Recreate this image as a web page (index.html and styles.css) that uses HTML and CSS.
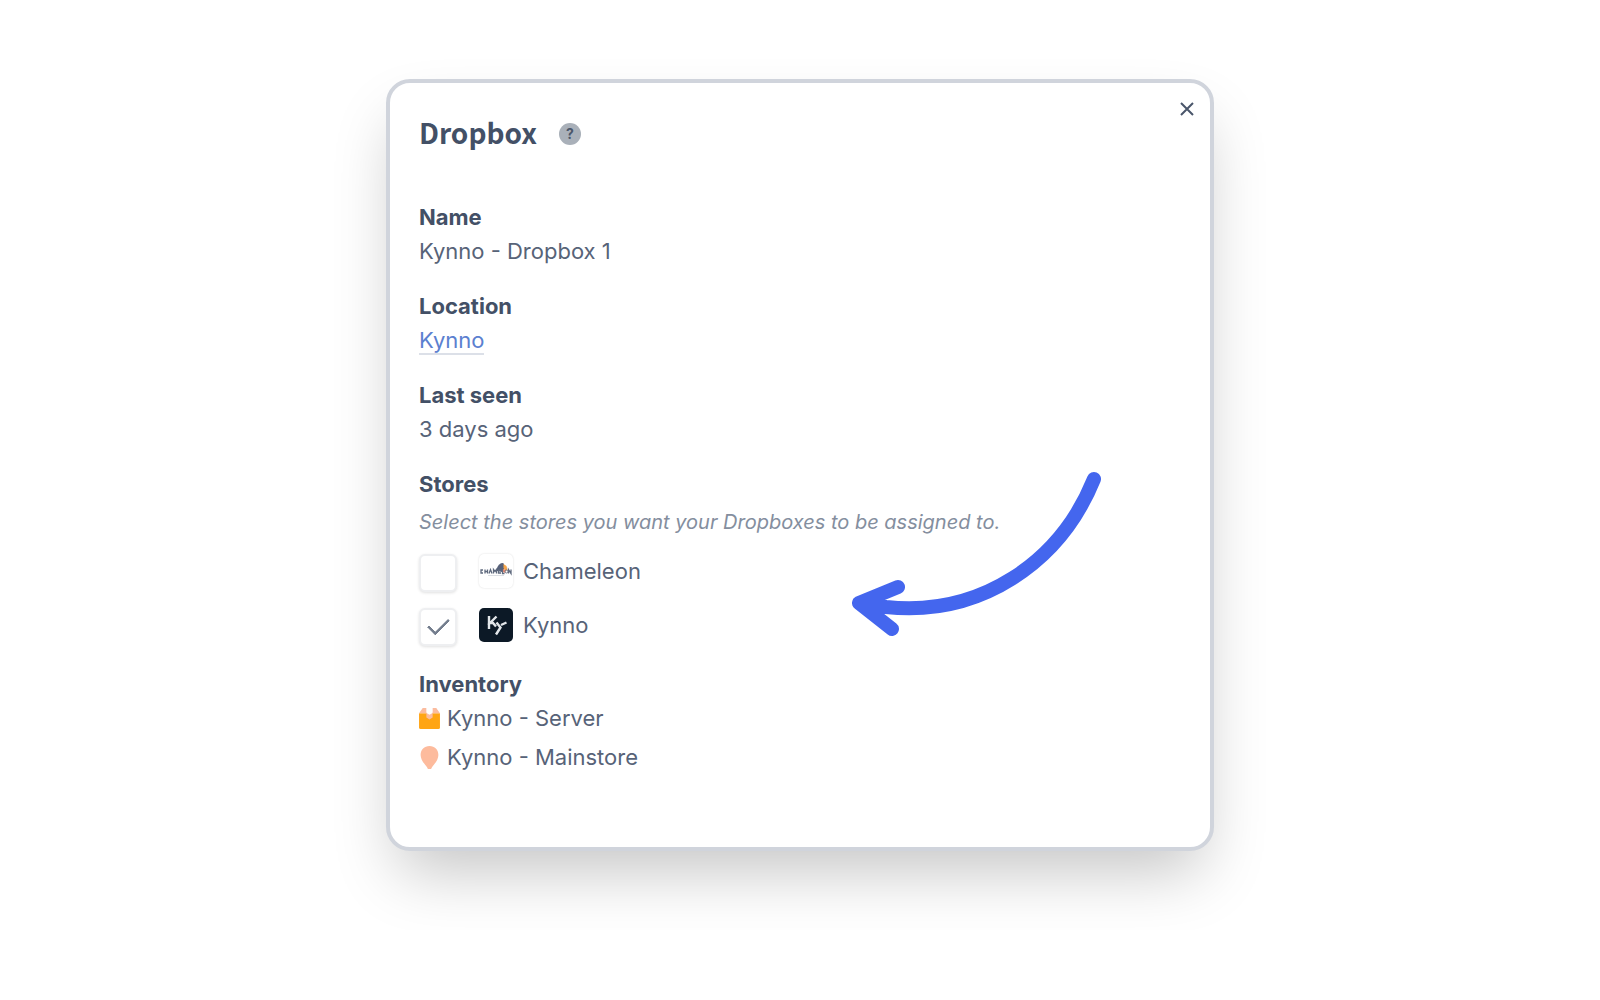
FILE: index.html
```html
<!DOCTYPE html>
<html lang="en">
<head>
<meta charset="utf-8">
<meta name="viewport" content="width=device-width, initial-scale=1">
<title>Dropbox</title>
<link rel="stylesheet" href="styles.css">
</head>
<body>
<main class="card">
  <header class="card-header">
    <h1 class="title">Dropbox</h1>
    <button class="help" type="button" aria-label="Help">?</button>
  </header>
  <button class="close" type="button" aria-label="Close">
    <svg width="14" height="14" viewBox="0 0 14 14" aria-hidden="true"><path d="M1 1l12 12M13 1l-12 12"/></svg>
  </button>

  <section class="group">
    <h2 class="label">Name</h2>
    <p class="value">Kynno - Dropbox 1</p>
  </section>
  <section class="group">
    <h2 class="label">Location</h2>
    <p class="value"><a class="link" href="#">Kynno</a></p>
  </section>
  <section class="group">
    <h2 class="label">Last seen</h2>
    <p class="value">3 days ago</p>
  </section>
  <section class="group">
    <h2 class="label">Stores</h2>
    <p class="hint">Select the stores you want your Dropboxes to be assigned to.</p>
    <div class="store">
      <input class="check" type="checkbox" id="store-chameleon">
      <label class="store-label" for="store-chameleon">
        <svg class="logo logo-light" viewBox="0 0 34 34" aria-hidden="true">
          <path fill="#56617a" d="M18 14c1-3 3-5 6-5l1 1v6l-2 2-5-1z"/>
          <path fill="#f5a54a" d="M24.500 10l3 2 1 4-2 1-2-3z"/>
          <path fill="#ee8a70" d="M24 15l3 1-1 3-2-1z"/>
          <path fill="none" stroke="#5f6a7e" stroke-width="1.300" d="M4 16H2v3h2M6 15.500v4M8.500 15.500v4M6 17.500h2.500M10 19.500l1.500-4 1.500 4M14.500 19.500v-4l1.500 2 1.500-2v4M22 16h-2.500v3H22M23.500 15.500v4h2M29.500 19.500v-4l2.500 4v-4"/>
          <circle cx="27.500" cy="17.500" r="1.500" fill="none" stroke="#6f7888"/>
          <path stroke="#dcdfe4" d="M9 21.500h16"/>
        </svg>
        Chameleon
      </label>
    </div>
    <div class="store">
      <input class="check" type="checkbox" id="store-kynno" checked>
      <label class="store-label" for="store-kynno">
        <svg class="logo logo-dark" viewBox="0 0 34 34" aria-hidden="true">
          <path fill="none" stroke="#e3e7ea" stroke-width="2.400" d="M10 8v13M17.500 8.500l-6.500 6.500h3l3 3.500M17.500 14.500l4 5-4.500 7M22 17l5.500-2.500"/>
        </svg>
        Kynno
      </label>
    </div>
  </section>
  <section class="group">
    <h2 class="label">Inventory</h2>
    <ul class="inventory">
      <li class="item">
        <svg class="item-icon" viewBox="0 0 20 22" aria-hidden="true">
          <path fill="#ffa514" d="M0 6h20v13.500a1.500 1.500 0 0 1-1.500 1.500h-17A1.500 1.500 0 0 1 0 19.500z"/>
          <path fill="#fbbc9f" d="M3.500 1H7v5H0zM16.500 1H13v5h7zM7 5.500h6V10l-3 2-3-2z"/>
          <path fill="#fff" d="M7.500 1h5v5L10 7.500 7.500 6z"/>
        </svg>
        Kynno - Server
      </li>
      <li class="item">
        <svg class="item-icon" viewBox="0 0 20 22" aria-hidden="true">
          <path fill="#fdbb9d" d="M10 0c5 0 8.500 3.600 8.500 8.500 0 4-3 8-6 11.500l-1 2h-3l-1-2c-3-3.500-6-7.500-6-11.500C1.500 3.600 5 0 10 0z"/>
        </svg>
        Kynno - Mainstore
      </li>
    </ul>
  </section>

  <svg class="arrow" viewBox="0 0 252 168" aria-hidden="true">
    <path d="M242 9C208 93 128 147 34 137L7 133l39-16M7 133l33 26"/>
  </svg>
</main>
</body>
</html>
```
FILE: styles.css
```css
* {
  box-sizing: border-box;
}

body {
  margin: 0;
  padding: 79px 24px;
  background: #fff;
  color: #576378;
  font: 22px/34px Inter, sans-serif;
}

h1, h2, p, ul {
  margin: 0;
  padding: 0;
}

.card {
  position: relative;
  max-width: 828px;
  margin: 0 auto;
  padding: 28px 29px 52px;
  border: 4px solid #d0d4dc;
  border-radius: 24px;
  background: #fff;
  box-shadow: 0 32px 64px -12px rgba(0, 0, 0, 0.23);
}

.card-header {
  display: flex;
  align-items: center;
  gap: 22px;
  margin-bottom: 47px;
}

.title {
  color: #435066;
  font: bold 28px/42px "Noto Sans CJK SC", "Noto Sans", sans-serif;
}

.help {
  width: 22px;
  height: 22px;
  margin-top: 4px;
  padding: 0;
  border: 0;
  border-radius: 50%;
  background: #a9b0b9;
  color: #4a566a;
  font: bold 14px/22px Inter, sans-serif;
}

.close {
  position: absolute;
  top: 14px;
  right: 11px;
  display: grid;
  place-items: center;
  width: 24px;
  height: 24px;
  padding: 0;
  border: 0;
  background: none;
}

.close path {
  stroke: #4a566b;
  stroke-width: 2;
}

.group {
  margin-bottom: 21px;
}

.label {
  color: #435066;
  font-size: 22px;
  font-weight: 700;
}

.link {
  color: #5b80d0;
  text-decoration: none;
  border-bottom: 2px solid #dce0e8;
}

.hint {
  margin: 4px 0 15px;
  color: #848e9e;
  font-size: 20px;
  font-style: italic;
}

.store {
  display: flex;
  align-items: flex-start;
  gap: 22px;
  margin-bottom: 16px;
}

.check {
  appearance: none;
  display: grid;
  place-items: center;
  width: 38px;
  height: 38px;
  margin: 0;
  border: 2px solid #eeeff1;
  border-radius: 6px;
  background: #fff;
  box-shadow: 0 1px 3px rgba(0, 0, 0, 0.12);
}

.check:checked::before {
  content: "";
  width: 18px;
  height: 9px;
  margin-bottom: 6px;
  border: solid #747e8e;
  border-width: 0 0 3px 3px;
  border-radius: 1px;
  transform: rotate(-45deg);
}

.store-label {
  display: flex;
  align-items: center;
  gap: 10px;
}

.logo {
  width: 34px;
  height: 34px;
  border-radius: 5px;
}

.logo-light {
  box-shadow: 0 0 2px rgba(0, 0, 0, 0.15);
}

.logo-dark {
  background: #0c1926;
}

.inventory {
  display: grid;
  gap: 5px;
  list-style: none;
}

.item {
  display: flex;
  align-items: center;
  gap: 7px;
}

.item-icon {
  width: 21px;
  height: 23px;
}

.arrow {
  position: absolute;
  top: 387px;
  right: 106px;
  width: 252px;
  height: 168px;
  fill: none;
  stroke: #4466ee;
  stroke-width: 14;
  stroke-linecap: round;
  stroke-linejoin: round;
  pointer-events: none;
}
```
